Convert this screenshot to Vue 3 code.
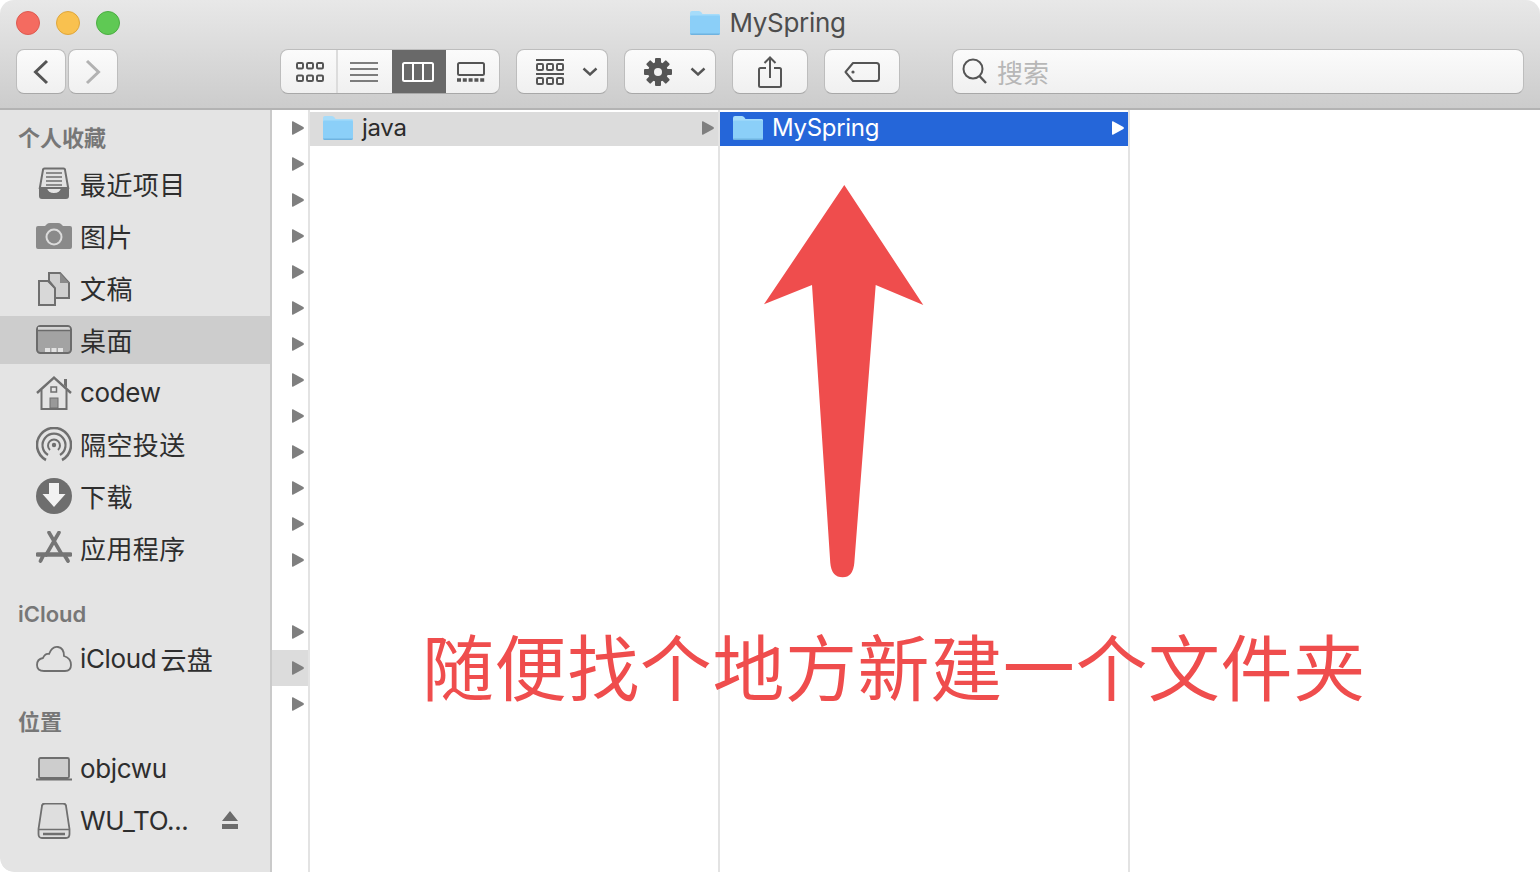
<script setup>
const hasArrow = [true, true, true, true, true, true, true, true, true, true, true, true, true, false, true, true, true]
const gridSquares = [0, 10, 20]
</script>

<template>
  <div class="window">
    <svg class="defs" width="0" height="0" aria-hidden="true">
      <defs>
        <symbol id="folder" viewBox="0 0 30 24">
          <path d="M1 23.5 Q0 23.5 0 22 V2 Q0 0 2 0 H9 Q10.5 0 11.5 1.5 L12.5 3 H29 Q30 3 30 4.5 V22 Q30 23.5 29 23.5 Z" fill="#a6dcfa" />
          <path d="M0 6 Q0 4.6 1.5 4.6 H28.5 Q30 4.6 30 6 V22 Q30 23.5 28.5 23.5 H1.5 Q0 23.5 0 22 Z" fill="#8bcff8" />
          <path d="M0 22.5 H30 V22 Q30 24 28.5 24 H1.5 Q0 24 0 22 Z" fill="#6fb3e0" />
        </symbol>
        <symbol id="tri" viewBox="0 0 12 14">
          <path d="M.9 .3 L11.4 6.1 Q12.3 7 11.4 7.9 L.9 13.7 Q0 14 0 13 V1 Q0 0 .9 .3 Z" fill="currentColor" />
        </symbol>
      </defs>
    </svg>

    <header class="toolbar">
      <div class="titlebar">
        <div class="lights">
          <span class="light red"></span>
          <span class="light yellow"></span>
          <span class="light green"></span>
        </div>
        <div class="title">
          <svg class="folder"><use href="#folder" /></svg>
          <span>MySpring</span>
        </div>
      </div>

      <div class="tools">
        <div class="nav">
          <button class="btn nav-btn">
            <svg width="16" height="26" viewBox="0 0 16 26"><path d="M14 2 L2.5 13 L14 24" fill="none" stroke="#555" stroke-width="3" /></svg>
          </button>
          <button class="btn nav-btn">
            <svg width="16" height="26" viewBox="0 0 16 26"><path d="M2 2 L13.5 13 L2 24" fill="none" stroke="#b2b2b2" stroke-width="3" /></svg>
          </button>
        </div>

        <div class="btn segments">
          <div class="seg seg-a">
            <svg width="28" height="20" viewBox="0 0 28 20">
              <g fill="none" stroke="#555" stroke-width="2">
                <rect v-for="x in gridSquares" :key="'a' + x" :x="x + 1" y="1" width="6" height="5.5" rx="1.2" />
                <rect v-for="x in gridSquares" :key="'b' + x" :x="x + 1" y="13.5" width="6" height="5.5" rx="1.2" />
              </g>
            </svg>
          </div>
          <div class="seg seg-b">
            <svg width="28" height="20" viewBox="0 0 28 20">
              <path d="M0 1 H28 M0 7 H28 M0 13 H28 M0 19 H28" stroke="#555" stroke-width="1.6" />
            </svg>
          </div>
          <div class="seg seg-c">
            <svg width="32" height="20" viewBox="0 0 32 20">
              <rect x="1" y="1" width="30" height="18" rx="1.5" fill="none" stroke="#fff" stroke-width="2" />
              <path d="M11 1 V19 M21 1 V19" stroke="#fff" stroke-width="2" />
            </svg>
          </div>
          <div class="seg seg-d">
            <svg width="28" height="20" viewBox="0 0 28 20">
              <rect x="1" y="1" width="26" height="12" rx="1.5" fill="none" stroke="#555" stroke-width="2" />
              <path d="M0 18 H28" stroke="#555" stroke-width="3.4" stroke-dasharray="4 1.8" />
            </svg>
          </div>
        </div>

        <button class="btn menu group-btn">
          <svg width="28" height="26" viewBox="0 0 28 26">
            <path d="M0 1 H28 M0 15 H28" stroke="#555" stroke-width="2" />
            <g fill="none" stroke="#555" stroke-width="2">
              <rect v-for="x in gridSquares" :key="'c' + x" :x="x + 1" y="5" width="6" height="6" rx="1" />
              <rect v-for="x in gridSquares" :key="'d' + x" :x="x + 1" y="19" width="6" height="6" rx="1" />
            </g>
          </svg>
          <svg class="caret" width="16" height="9" viewBox="0 0 16 9"><path d="M1.5 1.5 L8 7.5 L14.5 1.5" fill="none" stroke="#555" stroke-width="2.4" /></svg>
        </button>

        <button class="btn menu action-btn">
          <svg width="28" height="28" viewBox="0 0 28 28">
            <g fill="#555">
              <circle cx="14" cy="14" r="10" />
              <rect x="11" y="0" width="6" height="28" rx="1" />
              <rect x="11" y="0" width="6" height="28" rx="1" transform="rotate(45 14 14)" />
              <rect x="11" y="0" width="6" height="28" rx="1" transform="rotate(90 14 14)" />
              <rect x="11" y="0" width="6" height="28" rx="1" transform="rotate(135 14 14)" />
            </g>
            <circle cx="14" cy="14" r="4" fill="#f1f1f1" />
          </svg>
          <svg class="caret" width="16" height="9" viewBox="0 0 16 9"><path d="M1.5 1.5 L8 7.5 L14.5 1.5" fill="none" stroke="#555" stroke-width="2.4" /></svg>
        </button>

        <button class="btn share-btn">
          <svg width="24" height="32" viewBox="0 0 24 32">
            <path d="M8 12 H2.5 Q1 12 1 13.5 V29.5 Q1 31 2.5 31 H21.5 Q23 31 23 29.5 V13.5 Q23 12 21.5 12 H16" fill="none" stroke="#555" stroke-width="2" />
            <path d="M12 2 V22 M6.5 7 L12 1.5 L17.5 7" fill="none" stroke="#555" stroke-width="2" />
          </svg>
        </button>

        <button class="btn tag-btn">
          <svg width="36" height="20" viewBox="0 0 36 20">
            <path d="M9 1 H32.5 Q35 1 35 3.5 V16.5 Q35 19 32.5 19 H9 L1.5 10 Z" fill="none" stroke="#555" stroke-width="2" stroke-linejoin="round" />
            <circle cx="9" cy="10" r="1.6" fill="#555" />
          </svg>
        </button>

        <div class="btn search">
          <svg width="26" height="28" viewBox="0 0 26 28">
            <circle cx="11" cy="11" r="9.5" fill="none" stroke="#555" stroke-width="2" />
            <path d="M17.5 18 L24 25" stroke="#555" stroke-width="2.4" />
          </svg>
          <span>搜索</span>
        </div>
      </div>
    </header>

    <div class="body">
      <aside class="sidebar">
        <h3 class="head head-fav">个人收藏</h3>

        <div class="row">
          <svg class="ic" viewBox="0 0 36 36">
            <path d="M7 3 Q7 1.5 8.5 1.5 H27.5 Q29 1.500 29 3 L32.2 21 H3.8 Z" fill="#e2e2e2" stroke="#6f6f6f" stroke-width="2" />
            <path d="M10 6 H26 M10 10 H26 M10 14 H26 M10 18 H26" stroke="#6f6f6f" stroke-width="1.6" />
            <path d="M3 21 H11 Q12 26 18 26 Q24 26 25 21 H33 V29 Q33 32 30 32 H6 Q3 32 3 29 Z" fill="#6f6f6f" />
          </svg>
          <span class="cjk">最近项目</span>
        </div>

        <div class="row">
          <svg class="ic" viewBox="0 0 36 36">
            <path d="M0 9 Q0 7 2 7 H9 L11 5 Q12 4 14 4 H22 Q24 4 25 5 L27 7 H34 Q36 7 36 9 V28 Q36 30 34 30 H2 Q0 30 0 28 Z" fill="#8a8a8a" />
            <circle cx="18" cy="18" r="8.5" fill="#dcdcdc" />
            <circle cx="18" cy="18" r="6.5" fill="#8a8a8a" />
          </svg>
          <span class="cjk">图片</span>
        </div>

        <div class="row">
          <svg class="ic" viewBox="0 0 36 36">
            <path d="M3 10 H12 L19 17 V34 H3 Z" fill="#d8d8d8" stroke="#6f6f6f" stroke-width="2" />
            <path d="M13 2 H24 L33 12 V27 H19 V17 L13 10 Z" fill="#cfcfcf" stroke="#6f6f6f" stroke-width="2" />
            <path d="M24 2 V12 H33 Z" fill="#8a8a8a" />
          </svg>
          <span class="cjk">文稿</span>
        </div>

        <div class="row active">
          <svg class="ic" viewBox="0 0 36 36">
            <rect x="1" y="4" width="34" height="27" rx="3.5" fill="#a3a3a3" stroke="#6b6b6b" stroke-width="2" />
            <path d="M2 5 Q2 5 4 5 H32 Q34 5 34 7 V8 H2 Z" fill="#d4d4d4" />
            <path d="M1 8.5 H35" stroke="#6b6b6b" stroke-width="1.6" />
            <rect x="9" y="26" width="5" height="4" fill="#e2e2e2" />
            <rect x="15.5" y="26" width="5" height="4" fill="#e2e2e2" />
            <rect x="22" y="26" width="5" height="4" fill="#e2e2e2" />
          </svg>
          <span class="cjk">桌面</span>
        </div>

        <div class="row">
          <svg class="ic" viewBox="0 0 36 36">
            <path d="M1 18 L18 2.5 L35 18" fill="none" stroke="#6f6f6f" stroke-width="2.4" />
            <path d="M28 4 H31 V13 L28 10 Z" fill="#6f6f6f" />
            <path d="M5.5 15 V34 H30.5 V15" fill="none" stroke="#6f6f6f" stroke-width="2" />
            <rect x="15" y="12" width="5.5" height="5" fill="none" stroke="#6f6f6f" stroke-width="1.5" />
            <rect x="14" y="23" width="8" height="10" fill="#999" stroke="#6f6f6f" stroke-width="1" />
          </svg>
          <span class="lat">codew</span>
        </div>

        <div class="row">
          <svg class="ic" viewBox="0 0 36 36">
            <g fill="none" stroke="#6f6f6f">
              <path d="M10 33 A17 17 0 1 1 26 33" stroke-width="2.6" />
              <path d="M12 28 A11.5 11.5 0 1 1 24 28" stroke-width="2.2" />
              <path d="M14 23 A6 6 0 1 1 22 23" stroke-width="2" />
            </g>
            <circle cx="18" cy="18" r="2.2" fill="#6f6f6f" />
          </svg>
          <span class="cjk">隔空投送</span>
        </div>

        <div class="row">
          <svg class="ic ic-over" viewBox="0 0 36 36">
            <circle cx="18" cy="17" r="18" fill="#6e6e6e" />
            <path d="M13 4 H23 V15 H29.5 L18 28 L6.5 15 H13 Z" fill="#f2f2f2" />
          </svg>
          <span class="cjk">下载</span>
        </div>

        <div class="row">
          <svg class="ic" viewBox="0 0 36 36">
            <g stroke="#757575" fill="none" stroke-linecap="round">
              <path d="M13 1.5 L25 22 M23 1.5 L10 24" stroke-width="3.6" />
              <path d="M1.5 23.5 H34.5" stroke-width="4.5" />
              <path d="M7 25 L4.5 30 M29 25 L32 30" stroke-width="3.8" />
            </g>
          </svg>
          <span class="cjk">应用程序</span>
        </div>

        <h3 class="head head-cloud">iCloud</h3>
        <div class="row row-cloud">
          <svg class="ic" viewBox="0 0 36 36">
            <path d="M8 30 Q1 30 1 24 Q1 18 7 17 Q9 12 13 13 Q16 5 22 6 Q28 7 28 15 Q35 17 35 24 Q35 30 29 30 Z" fill="none" stroke="#6f6f6f" stroke-width="1.8" />
          </svg>
          <span class="cloud-name"><span class="lat">iCloud</span><span class="cjk cloud-cjk">云盘</span></span>
        </div>

        <h3 class="head head-loc">位置</h3>
        <div class="row row-mac">
          <svg class="ic" viewBox="0 0 36 36">
            <rect x="3" y="7" width="30" height="20" rx="1.5" fill="#cdcdcd" stroke="#6f6f6f" stroke-width="1.8" />
            <path d="M0 28.5 H36" stroke="#6f6f6f" stroke-width="1.8" />
          </svg>
          <span class="lat">objcwu</span>
        </div>

        <div class="row">
          <svg class="ic" viewBox="0 0 36 36">
            <path d="M6 3 Q6 .5 9 .5 H27 Q30 .5 30 3 L33.5 26 V31 Q33.5 35 30 35 H6 Q2.5 35 2.5 31 V26 Z" fill="#dedede" stroke="#6f6f6f" stroke-width="1.8" />
            <path d="M3 26.5 H33" stroke="#6f6f6f" stroke-width="1.6" />
            <path d="M7 31 H29" stroke="#6f6f6f" stroke-width="2.4" />
          </svg>
          <span class="lat drive-name">WU_TO...</span>
          <svg class="eject" width="16" height="18" viewBox="0 0 16 18">
            <path d="M8 0 L16 10 H0 Z M0 13 H16 V18 H0 Z" fill="#6b6b6b" />
          </svg>
        </div>
      </aside>

      <div class="col col-tree">
        <div v-for="(on, i) in hasArrow" :key="i" class="tree-row" :class="{ picked: i === 15 }">
          <svg v-if="on" class="tri"><use href="#tri" /></svg>
        </div>
      </div>

      <div class="col col-main">
        <div class="file file-gray">
          <svg class="folder"><use href="#folder" /></svg>
          <span>java</span>
          <svg class="tri end"><use href="#tri" /></svg>
        </div>
      </div>

      <div class="col col-main">
        <div class="file file-blue">
          <svg class="folder"><use href="#folder" /></svg>
          <span>MySpring</span>
          <svg class="tri end"><use href="#tri" /></svg>
        </div>
      </div>

      <div class="col-rest"></div>
    </div>

    <svg class="arrow" width="170" height="400" viewBox="760 182 170 400">
      <path d="M844.3 185 L923.3 305 L875.7 285 L854.3 563 Q853 577.3 842.7 577.3 Q831.5 577.3 830.3 563 L812 285 L764 304.3 Z" fill="#ef4d4d" />
    </svg>
    <div class="note">随便找个地方新建一个文件夹</div>
  </div>
</template>

<style>
html, body { margin: 0; background: #fff; overflow: hidden; }
</style>

<style scoped>
.window {
  position: relative;
  width: 1540px;
  height: 872px;
  display: flex;
  flex-direction: column;
  overflow: hidden;
  background: #fff;
  border-radius: 14px 14px 0 14px;
  font-family: "Inter", "Noto Sans CJK SC", sans-serif;
  color: #2b2b2b;
}
.defs { position: absolute; }
.toolbar {
  height: 108px;
  flex: none;
  border-bottom: 2px solid #b3b3b3;
  background: linear-gradient(#e8e8e8, #cccccc);
  box-sizing: content-box;
}
.titlebar {
  height: 46px;
  display: grid;
  grid-template-columns: 1fr auto 1fr;
  align-items: center;
}
.lights {
  grid-column: 1;
  display: flex;
  gap: 16px;
  padding-left: 16px;
}
.light {
  width: 24px;
  height: 24px;
  border-radius: 50%;
  box-sizing: border-box;
  border: 1px solid rgba(0, 0, 0, .12);
}
.red { background: #f46b60; border-color: #dd5a50; }
.yellow { background: #f9c14f; border-color: #dea63c; }
.green { background: #5fc954; border-color: #4cad43; }
.title {
  grid-column: 2;
  display: flex;
  align-items: center;
  gap: 9px;
  font-size: 26px;
  letter-spacing: -.3px;
  color: #4d4d4d;
  margin-right: 4px;
}
.title span { margin-top: -1px; }
.folder { width: 30px; height: 24px; flex: none; }
.tools {
  display: flex;
  align-items: flex-start;
  padding: 3px 16px 0;
}
.btn {
  height: 45px;
  box-sizing: border-box;
  margin: 0;
  padding: 0;
  border: 1px solid #bdbdbd;
  border-bottom-color: #a8a8a8;
  border-radius: 8px;
  background: linear-gradient(#fbfbfb, #f0f0f0);
  display: flex;
  align-items: center;
  justify-content: center;
  flex: none;
}
.nav { display: flex; gap: 2px; margin-right: 162px; }
.nav-btn { width: 50px; }
.segments {
  width: 220px;
  overflow: hidden;
  align-items: stretch;
  justify-content: flex-start;
}
.seg { display: flex; align-items: center; justify-content: center; box-sizing: border-box; }
.seg-a { width: 57px; padding-left: 3px; border-right: 2px solid #dcdcdc; }
.seg-b { width: 54px; padding-right: 2px; }
.seg-c { width: 54px; padding-right: 2px; background: #696969; margin: -1px 0; }
.seg-d { flex: 1; padding-right: 4px; }
.menu { width: 92px; justify-content: flex-start; }
.group-btn { margin-left: 16px; padding-left: 19px; }
.group-btn .caret { margin-left: 18px; }
.action-btn { margin-left: 16px; padding-left: 19px; }
.action-btn .caret { margin-left: 18px; }
.share-btn { width: 76px; margin-left: 16px; }
.tag-btn { width: 76px; margin-left: 16px; }
.search {
  width: 572px;
  margin-left: 52px;
  justify-content: flex-start;
  padding-left: 9px;
  gap: 9px;
  font-size: 26px;
  color: #b7b7b7;
}
.search span { margin-top: -1px; }
.body { flex: 1; display: flex; min-height: 0; }
.sidebar {
  width: 270px;
  flex: none;
  box-sizing: content-box;
  border-right: 2px solid #cacaca;
  background: #e4e4e4;
  border-bottom-left-radius: 14px;
  padding-top: 14px;
}
.head {
  margin: 0 0 0 18px;
  height: 28px;
  line-height: 28px;
  font-size: 22px;
  font-weight: 600;
  color: #777;
}
.head-fav { margin-bottom: 7px; }
.head-cloud { margin-top: 25px; margin-bottom: 5px; }
.head-loc { margin-top: 23px; margin-bottom: 7px; }
.row {
  height: 52px;
  display: flex;
  align-items: center;
  gap: 8px;
  padding-left: 36px;
  font-size: 26px;
  color: #2e2e2e;
  box-sizing: border-box;
}
.row .cjk { margin-top: -4px; letter-spacing: .4px; }
.row .lat { margin-top: -2px; letter-spacing: -.35px; }
.row.active {
  background: #cdcdcd;
  height: 48px;
  margin: 1px 0 3px;
}
.row.active .cjk { margin-top: -2px; }
.cloud-name { display: flex; align-items: center; }
.row .cloud-cjk { margin-left: 4px; margin-top: -2px; }
.ic { width: 36px; height: 36px; flex: none; }
.ic-over { overflow: visible; }
.drive-name { width: 134px; flex: none; white-space: nowrap; }
.eject { flex: none; margin-top: -2px; }
.col { flex: none; box-sizing: content-box; border-right: 2px solid #e3e3e3; }
.col-tree { width: 36px; }
.col-main { width: 408px; }
.col-rest { flex: 1; }
.tree-row {
  height: 36px;
  display: flex;
  align-items: center;
  padding-left: 20px;
  box-sizing: border-box;
}
.tree-row.picked { background: #dcdcdc; }
.tri { width: 12px; height: 14px; flex: none; color: #7f7f7f; }
.file {
  height: 34px;
  box-sizing: border-box;
  margin-top: 2px;
  padding: 0 4px 2px 13px;
  display: flex;
  align-items: center;
  gap: 9px;
  font-size: 24px;
  letter-spacing: -.3px;
  color: #2b2b2b;
}
.file span { margin-top: -1px; }
.file .end { margin-left: auto; }
.file-gray { background: #dcdcdc; }
.file-blue { background: #2566d9; color: #fff; }
.file-blue .end { color: #fff; }
.arrow { position: absolute; left: 760px; top: 182px; }
.note {
  position: absolute;
  left: 422px;
  top: 616px;
  font-size: 72px;
  line-height: 96px;
  font-weight: 400;
  letter-spacing: .6px;
  color: #ef4d4d;
  white-space: nowrap;
  font-family: "Noto Sans CJK SC", sans-serif;
}
</style>
